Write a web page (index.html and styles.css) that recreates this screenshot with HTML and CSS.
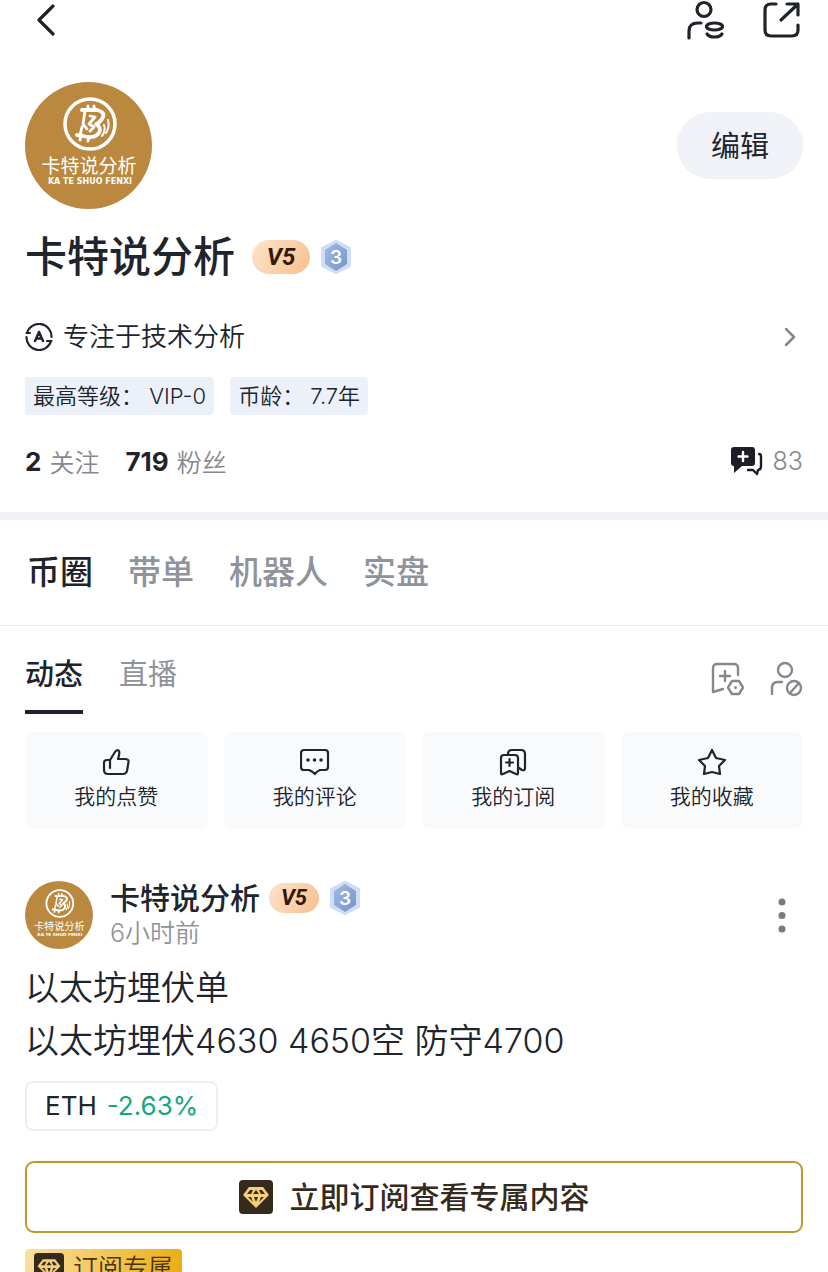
FILE: index.html
```html
<!DOCTYPE html>
<html lang="zh-CN">
<head>
<meta charset="utf-8">
<meta name="viewport" content="width=device-width, initial-scale=1">
<title>卡特说分析</title>
<link rel="stylesheet" href="styles.css">
</head>
<body>
<svg class="defs" aria-hidden="true">
  <defs>
    <linearGradient id="hexFill" x1="0" y1="0" x2="1" y2="1">
      <stop offset="0" stop-color="#a3bbe3"/>
      <stop offset="1" stop-color="#7394cc"/>
    </linearGradient>
    <symbol id="logo" viewBox="0 0 127 127">
      <circle cx="63.500" cy="63.500" r="63.500" fill="#bb8840"/>
      <g fill="none" stroke="#fff" stroke-linecap="round" stroke-linejoin="round">
        <circle cx="65" cy="42" r="25" stroke-width="3.500"/>
        <path d="M57 28H72Q80 30 78 35Q76 40 71 42Q77 45 74 51Q70 56 63 55L52 53" stroke-width="3.800"/>
        <path d="M60 29L58 42L62 47M57 45L55 53M65 34L70 35L64 42L69 45L65 49" stroke-width="2.800"/>
        <path d="M63 24V28M69 24V28M56 52L55 58M64 55L63 59" stroke-width="3"/>
        <path d="M79 43Q81 48 77 54M83 38Q85 45 81 51" stroke-width="2"/>
      </g>
      <text class="logo-name" x="64" y="91" text-anchor="middle">卡特说分析</text>
      <text class="logo-latin" x="65" y="102" text-anchor="middle">KA TE SHUO FENXI</text>
    </symbol>
    <symbol id="hex" viewBox="0 0 32 34">
      <path d="M16 1L30 8V26L16 33L2 26V8Z" fill="#cfdef4" stroke="#cfdef4" stroke-width="2" stroke-linejoin="round"/>
      <path d="M16 3L27 10V24L16 31L5 24V10Z" fill="url(#hexFill)"/>
      <text class="hex-num" x="16" y="24" text-anchor="middle">3</text>
    </symbol>
    <symbol id="gem" viewBox="0 0 34 34">
      <rect width="34" height="34" rx="4" fill="#352b1d"/>
      <path d="M10 7H24L30 15L17 28L4 15Z" fill="#f8cf79"/>
      <path d="M11 10L8 14H12L14 10ZM17 10L14 14H20ZM20 10L22 14H26L23 10ZM9 17L14 22L12 17ZM15 17L17 22L19 17ZM22 17L20 22L25 17Z" fill="#352b1d"/>
    </symbol>
  </defs>
</svg>

<header class="topbar">
  <button class="icon-btn back" aria-label="返回"><svg width="22" height="32" viewBox="0 0 22 32" fill="none" stroke="currentColor" stroke-width="3.200" stroke-linecap="round" stroke-linejoin="round"><path d="M18 2L4 16L18 30"/></svg></button>
  <button class="icon-btn" aria-label="账户"><svg width="40" height="40" viewBox="0 0 40 40" fill="none" stroke="currentColor" stroke-width="3.200" stroke-linecap="round"><circle cx="18" cy="9.500" r="7"/><path d="M3 38V31Q3 23 12 23H15"/><ellipse cx="28.500" cy="26.500" rx="8" ry="3.500"/><path d="M21 34Q23 37 28.500 37Q34 37 36 34"/></svg></button>
  <button class="icon-btn" aria-label="分享"><svg width="40" height="40" viewBox="0 0 40 40" fill="none" stroke="currentColor" stroke-width="3.200" stroke-linecap="round" stroke-linejoin="round"><path d="M14 4H9Q3 4 3 10V30Q3 36 9 36H30Q36 36 36 30V25M25 4H36V15M36 4L19 20"/></svg></button>
</header>

<main>
  <section class="profile">
    <div class="identity">
      <svg class="avatar" role="img" aria-label="卡特说分析"><use href="#logo"/></svg>
      <button class="edit">编辑</button>
    </div>
    <div class="name-row">
      <h1 class="name">卡特说分析</h1>
      <span class="vip">V5</span>
      <svg class="hex"><use href="#hex"/></svg>
    </div>
    <a class="bio" href="#bio">
      <svg width="28" height="28" viewBox="0 0 28 28" fill="none" stroke="currentColor" stroke-width="2.200" stroke-linecap="round" stroke-linejoin="round"><path d="M2 10A12.500 12.500 0 0 1 26.500 14M1.500 14A12.500 12.500 0 0 0 26 18M1.500 10H5M26.500 18H22"/><path d="M10 18L14 9L18 18M11.500 15.500H16.500" stroke-width="2.500"/></svg>
      <span class="bio-text">专注于技术分析</span>
      <svg class="chevron" width="14" height="20" viewBox="0 0 14 20" fill="none" stroke="currentColor" stroke-width="2.500" stroke-linecap="round" stroke-linejoin="round"><path d="M3 2L11 10L3 18"/></svg>
    </a>
    <div class="chips">
      <span class="chip">最高等级： VIP-0</span>
      <span class="chip">币龄： 7.7年</span>
    </div>
    <div class="stats">
      <a class="stat" href="#following"><b>2</b>关注</a>
      <a class="stat" href="#fans"><b>719</b>粉丝</a>
      <a class="stat posts" href="#posts"><svg width="34" height="30" viewBox="0 0 34 30"><path d="M4 1H22Q25 1 25 4V17Q25 20 22 20H12L4 27V20Q1 20 1 17V4Q1 1 4 1Z" fill="#1c1d26"/><path d="M13 6V15M8.500 10.500H17.500" stroke="#fff" stroke-width="2.400" stroke-linecap="round"/><path d="M29 8Q31 8 31 11V20Q31 24 28 24L27 28L23 24H18" fill="none" stroke="#1c1d26" stroke-width="2.400" stroke-linecap="round" stroke-linejoin="round"/></svg>83</a>
    </div>
  </section>

  <nav class="tabs">
    <a class="tab active" href="#coin">币圈</a>
    <a class="tab" href="#copy">带单</a>
    <a class="tab" href="#bot">机器人</a>
    <a class="tab" href="#real">实盘</a>
  </nav>

  <section class="feed">
    <div class="subbar">
      <a class="subtab active" href="#moments">动态</a>
      <a class="subtab" href="#live">直播</a>
      <div class="tools">
        <button class="icon-btn" aria-label="订阅设置"><svg width="34" height="36" viewBox="0 0 34 36" fill="none" stroke="currentColor" stroke-width="2.400" stroke-linecap="round" stroke-linejoin="round"><path d="M27 14V7Q27 3 23 3H6Q2 3 2 7V31L12 28M14 10V20M9 15H19"/><path d="M21 20H28L32 26.500L28 33H21L17 26.500Z"/><circle cx="24.500" cy="26.500" r="1.500" fill="currentColor" stroke="none"/></svg></button>
        <button class="icon-btn" aria-label="屏蔽名单"><svg width="34" height="36" viewBox="0 0 34 36" fill="none" stroke="currentColor" stroke-width="2.400" stroke-linecap="round"><circle cx="16" cy="9" r="7"/><path d="M3 33V27Q3 21 9 21H13"/><circle cx="25" cy="27" r="7"/><path d="M21 32L30 22"/></svg></button>
      </div>
    </div>

    <div class="cards">
      <button class="card"><svg width="30" height="30" viewBox="0 0 30 30" fill="none" stroke="currentColor" stroke-width="2.200" stroke-linecap="round" stroke-linejoin="round"><path d="M9 20V12L14 4Q16 1 18 3Q19 5 17 11H24Q28 11 27.500 14L26 23Q25 26 22 26H7Q3 26 3 22V15Q3 12 6 12H9"/></svg>我的点赞</button>
      <button class="card"><svg width="30" height="30" viewBox="0 0 30 30" fill="none" stroke="currentColor" stroke-width="2.200" stroke-linecap="round" stroke-linejoin="round"><path d="M4 2H25Q28 2 28 5V19Q28 22 25 22H20Q17 23 15 26Q12 23 9 22H4Q1 22 1 19V5Q1 2 4 2Z"/><path d="M8 12H8.100M14.500 12H14.600M21 12H21.100" stroke-width="3.500"/></svg>我的评论</button>
      <button class="card"><svg width="30" height="30" viewBox="0 0 30 30" fill="none" stroke="currentColor" stroke-width="2.200" stroke-linecap="round" stroke-linejoin="round"><path d="M6 7H17Q20 7 20 10V25Q20 27 18 26L11.500 23L5 26Q3 27 3 25V10Q3 7 6 7ZM11.500 11V18M8 14.500H15"/><path d="M10 6Q10 2 14 2H23Q27 2 27 6V20Q27 23 24 22L21 20"/></svg>我的订阅</button>
      <button class="card"><svg width="30" height="30" viewBox="0 0 30 30" fill="none" stroke="currentColor" stroke-width="2.200" stroke-linejoin="round"><path d="M15 2L19 10L28 12L22 18L23 26L15 24L7 26L8 18L2 12L11 10Z"/></svg>我的收藏</button>
    </div>

    <article class="post">
      <div class="post-head">
        <svg class="avatar small" role="img" aria-label="卡特说分析"><use href="#logo"/></svg>
        <div class="author">
          <div class="author-row">
            <h2 class="author-name">卡特说分析</h2>
            <span class="vip compact">V5</span>
            <svg class="hex"><use href="#hex"/></svg>
          </div>
          <time class="time">6小时前</time>
        </div>
        <button class="icon-btn more" aria-label="更多"><svg width="10" height="36" viewBox="0 0 10 36" fill="currentColor"><circle cx="5" cy="5" r="3.500"/><circle cx="5" cy="18.500" r="3.500"/><circle cx="5" cy="32" r="3.500"/></svg></button>
      </div>
      <p class="post-text">以太坊埋伏单<br>以太坊埋伏4630 4650空 防守4700</p>
      <a class="ticker" href="#eth"><span>ETH</span><span class="change">-2.63%</span></a>
      <button class="subscribe"><svg width="34" height="34"><use href="#gem"/></svg><span class="subscribe-text">立即订阅查看专属内容</span></button>
      <span class="exclusive"><svg width="30" height="30"><use href="#gem"/></svg>订阅专属</span>
    </article>
  </section>
</main>
</body>
</html>
```

FILE: styles.css
```css
* {
  box-sizing: border-box;
}

body {
  margin: 0;
  height: 100vh;
  overflow: hidden;
  background: #fff;
  color: #20242c;
  font-family: Inter, "Noto Sans CJK SC", sans-serif;
}

h1,
h2,
p {
  margin: 0;
}

a {
  color: inherit;
  text-decoration: none;
}

button {
  padding: 0;
  border: 0;
  background: none;
  color: inherit;
  font: inherit;
}

svg {
  display: block;
  flex: none;
}

.defs {
  position: absolute;
  width: 0;
  height: 0;
}

.logo-name {
  fill: #fff;
  font-size: 19px;
  font-weight: 400;
}

.logo-latin {
  fill: #fff;
  font: 700 8px "DejaVu Sans", sans-serif;
}

.hex-num {
  fill: #fff;
  font-size: 19px;
  font-weight: 600;
}

.topbar {
  display: flex;
  align-items: center;
  gap: 36px;
  height: 40px;
  padding: 0 26px 0 35px;
  color: #20242a;
}

.back {
  margin-right: auto;
}

.profile {
  padding: 42px 25px 33px;
  border-bottom: 8px solid #f0f1f4;
}

.identity {
  display: flex;
  align-items: center;
  justify-content: space-between;
}

.avatar {
  width: 127px;
  height: 127px;
}

.avatar.small {
  width: 68px;
  height: 68px;
}

.edit {
  height: 67px;
  padding: 0 34px 4px;
  border-radius: 34px;
  background: #f0f2f8;
  font-size: 29px;
  font-weight: 400;
}

.name-row {
  display: flex;
  align-items: center;
  height: 60px;
  margin-top: 18px;
}

.name {
  margin-right: 17px;
  font-size: 42px;
  font-weight: 500;
  line-height: 60px;
}

.vip {
  width: 58px;
  margin-right: 10px;
  border-radius: 17px;
  background: linear-gradient(120deg, #fde3cd, #f8c08c);
  color: #35180a;
  font: italic 700 24px/34px Roboto, sans-serif;
  text-align: center;
}

.vip.compact {
  width: 50px;
  font-size: 22px;
  line-height: 30px;
}

.hex {
  width: 32px;
  height: 34px;
}

.bio {
  display: flex;
  align-items: center;
  gap: 10px;
  height: 40px;
  margin-top: 30px;
  font-size: 26px;
  font-weight: 350;
}

.bio-text {
  padding-bottom: 5px;
}

.chevron {
  margin-left: auto;
  margin-right: 6px;
  color: #85898e;
}

.chips {
  display: flex;
  gap: 16px;
  margin-top: 20px;
}

.chip {
  padding: 0 8px;
  border-radius: 4px;
  background: #ecf0f8;
  font-size: 22px;
  font-weight: 350;
  line-height: 38px;
}

.stats {
  display: flex;
  align-items: center;
  gap: 26px;
  height: 36px;
  margin-top: 28px;
  color: #85898e;
  font-size: 25px;
  font-weight: 350;
}

.stat {
  display: flex;
  align-items: center;
  gap: 8px;
}

.stat b {
  color: #20242a;
  font-size: 26px;
  font-weight: 700;
}

.posts {
  gap: 9px;
  margin-left: auto;
}

.tabs {
  display: flex;
  gap: 35px;
  padding: 0 27px;
  border-bottom: 1px solid #e9eaed;
  color: #8f949b;
  font-size: 33px;
  font-weight: 500;
  line-height: 105px;
}

.tab.active,
.subtab.active {
  color: #20242a;
}

.feed {
  padding: 0 25px;
}

.subbar {
  display: flex;
  gap: 36px;
  height: 89px;
  padding-top: 20px;
  color: #8f949b;
  font-size: 29px;
}

.subtab {
  height: 68px;
  line-height: 58px;
}

.subtab.active {
  border-bottom: 4px solid #20242a;
  font-weight: 500;
}

.tools {
  display: flex;
  align-items: center;
  gap: 24px;
  height: 66px;
  margin-left: auto;
  color: #85898e;
}

.cards {
  display: grid;
  grid-template-columns: repeat(4, 1fr);
  gap: 16px;
  margin-top: 17px;
}

.card {
  display: flex;
  flex-direction: column;
  align-items: center;
  gap: 2px;
  padding: 16px 0;
  border-radius: 8px;
  background: #f8fafc;
  font-size: 21px;
  font-weight: 350;
  line-height: 33px;
}

.post {
  display: flex;
  flex-direction: column;
  align-items: flex-start;
  padding-top: 51px;
}

.post-head {
  display: flex;
  align-items: center;
  gap: 17px;
  align-self: stretch;
}

.author-row {
  display: flex;
  align-items: center;
  height: 36px;
}

.author-name {
  margin-right: 9px;
  font-size: 30px;
  font-weight: 500;
  line-height: 36px;
}

.time {
  display: block;
  color: #8f949b;
  font-size: 25px;
  font-weight: 350;
  line-height: 34px;
}

.more {
  margin-left: auto;
  margin-right: 16px;
  color: #777b80;
}

.post-text {
  margin-top: 11px;
  font-size: 34px;
  font-weight: 350;
  line-height: 53px;
}

.ticker {
  display: flex;
  gap: 10px;
  margin-top: 14px;
  padding: 0 18px;
  border: 2px solid #eeeff1;
  border-radius: 8px;
  font-size: 26px;
  line-height: 46px;
}

.change {
  color: #15a877;
}

.subscribe {
  display: flex;
  align-items: center;
  justify-content: center;
  align-self: stretch;
  gap: 17px;
  height: 72px;
  margin-top: 30px;
  border: 2px solid #bd982f;
  border-radius: 9px;
  color: #352b1d;
  font-size: 30px;
  font-weight: 500;
}

.subscribe-text {
  padding-bottom: 5px;
}

.exclusive {
  display: flex;
  align-items: center;
  gap: 9px;
  margin-top: 16px;
  padding: 0 9px;
  border-radius: 4px;
  background: linear-gradient(100deg, #fae0a0, #eaac12);
  color: #49330e;
  font-size: 25px;
  font-weight: 350;
  line-height: 38px;
}
```
